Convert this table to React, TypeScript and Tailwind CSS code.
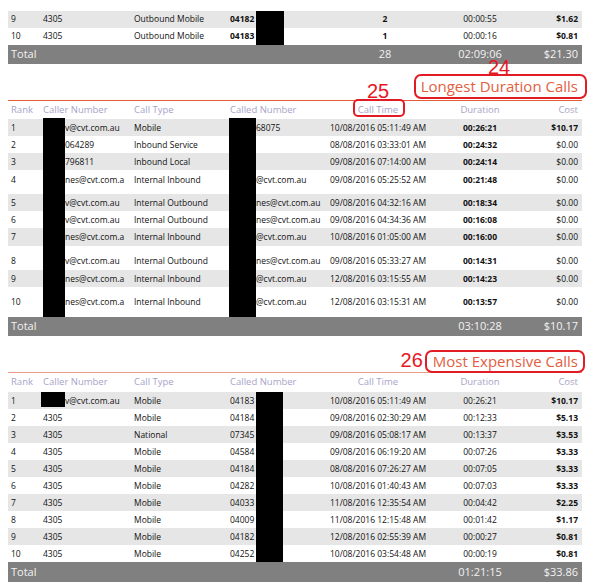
import React from 'react';

interface CallRow {
  rank: string;
  caller: string;
  type: string;
  called: string;
  time: string;
  dur: string;
  cost: string;
  row: string; // height + vertical alignment of the row
  durBold?: boolean;
  costBold?: boolean;
  calledBold?: boolean;
  callerPad?: boolean;
  calledPad?: boolean;
}

const cols = 'grid grid-cols-[35px_91px_96px_88px_120px_84px_60px]';
const colsFirst = 'grid grid-cols-[35px_91px_96px_88px_134px_56px_74px]';

const firstRows = [
  { rank: '9', caller: '4305', type: 'Outbound Mobile', called: '04182', count: '2', dur: '00:00:55', cost: '$1.62' },
  { rank: '10', caller: '4305', type: 'Outbound Mobile', called: '04183', count: '1', dur: '00:00:16', cost: '$0.81' },
];

const s17 = 'h-[17px] items-center';

// Longest duration calls
const longestRows: CallRow[] = [
  { rank: '1', caller: 'v@cvt.com.au', type: 'Mobile', called: '68075', time: '10/08/2016 05:11:49 AM', dur: '00:26:21', cost: '$10.17', row: s17, costBold: true },
  { rank: '2', caller: '064289', type: 'Inbound Service', called: '', time: '08/08/2016 03:33:01 AM', dur: '00:24:32', cost: '$0.00', row: s17 },
  { rank: '3', caller: '796811', type: 'Inbound Local', called: '', time: '09/08/2016 07:14:00 AM', dur: '00:24:14', cost: '$0.00', row: s17 },
  { rank: '4', caller: 'nes@cvt.com.a', type: 'Internal Inbound', called: '@cvt.com.au', time: '09/08/2016 05:25:52 AM', dur: '00:21:48', cost: '$0.00', row: 'h-[24px] items-start pt-[4px]' },
  { rank: '5', caller: 'v@cvt.com.au', type: 'Internal Outbound', called: 'nes@cvt.com.au', time: '09/08/2016 04:32:16 AM', dur: '00:18:34', cost: '$0.00', row: s17 },
  { rank: '6', caller: 'v@cvt.com.au', type: 'Internal Outbound', called: 'nes@cvt.com.au', time: '09/08/2016 04:34:36 AM', dur: '00:16:08', cost: '$0.00', row: s17 },
  { rank: '7', caller: 'nes@cvt.com.a', type: 'Internal Inbound', called: '@cvt.com.au', time: '10/08/2016 01:05:00 AM', dur: '00:16:00', cost: '$0.00', row: 'h-[18px] items-center' },
  { rank: '8', caller: 'v@cvt.com.au', type: 'Internal Outbound', called: 'nes@cvt.com.au', time: '09/08/2016 05:33:27 AM', dur: '00:14:31', cost: '$0.00', row: 'h-[24px] items-start pt-[9px]' },
  { rank: '9', caller: 'nes@cvt.com.a', type: 'Internal Inbound', called: '@cvt.com.au', time: '12/08/2016 03:15:55 AM', dur: '00:14:23', cost: '$0.00', row: s17 },
  { rank: '10', caller: 'nes@cvt.com.a', type: 'Internal Inbound', called: '@cvt.com.au', time: '12/08/2016 03:15:31 AM', dur: '00:13:57', cost: '$0.00', row: 'h-[30px] items-center' },
].map((r) => ({ ...r, durBold: true, callerPad: true, calledPad: true }));

// Most expensive calls
const expensiveRows: CallRow[] = [
  ['1', 'v@cvt.com.au', 'Mobile', '04183', '10/08/2016 05:11:49 AM', '00:26:21', '$10.17'],
  ['2', '4305', 'Mobile', '04184', '09/08/2016 02:30:29 AM', '00:12:33', '$5.13'],
  ['3', '4305', 'National', '07345', '09/08/2016 05:08:17 AM', '00:13:37', '$3.53'],
  ['4', '4305', 'Mobile', '04584', '09/08/2016 06:19:20 AM', '00:07:26', '$3.33'],
  ['5', '4305', 'Mobile', '04184', '08/08/2016 07:26:27 AM', '00:07:05', '$3.33'],
  ['6', '4305', 'Mobile', '04282', '10/08/2016 01:40:43 AM', '00:07:03', '$3.33'],
  ['7', '4305', 'Mobile', '04033', '11/08/2016 12:35:54 AM', '00:04:42', '$2.25'],
  ['8', '4305', 'Mobile', '04009', '11/08/2016 12:15:48 AM', '00:01:42', '$1.17'],
  ['9', '4305', 'Mobile', '04182', '12/08/2016 02:55:39 AM', '00:00:27', '$0.81'],
  ['10', '4305', 'Mobile', '04252', '10/08/2016 03:54:48 AM', '00:00:19', '$0.81'],
].map(([rank, caller, type, called, time, dur, cost]) => ({
  rank, caller, type, called, time, dur, cost,
  row: s17,
  costBold: true,
  callerPad: rank === '1',
}));

const HeaderRow = ({ h }: { h: string }) => (
  <div className={`${cols} ${h} items-center text-[9.5px] text-[#a7a4c8]`}>
    <div className="pl-[3px]">Rank</div>
    <div>Caller Number</div>
    <div>Call Type</div>
    <div className="whitespace-nowrap">Called Number</div>
    <div className="text-center">Call Time</div>
    <div className="text-center">Duration</div>
    <div className="text-right pr-[4px]">Cost</div>
  </div>
);

const DataRow = ({ r, i }: { r: CallRow; i: number }) => (
  <div className={`${cols} ${r.row} ${i % 2 === 0 ? 'bg-[#e6e6e6]' : 'bg-white'} leading-[12px]`}>
    <div className="pl-[3px]">{r.rank}</div>
    <div className={`whitespace-nowrap overflow-hidden ${r.callerPad ? 'pl-[22px]' : ''}`}>{r.caller}</div>
    <div className="whitespace-nowrap">{r.type}</div>
    <div className={`whitespace-nowrap ${r.calledPad ? 'pl-[26px]' : ''} ${r.calledBold ? 'font-bold' : ''}`}>{r.called}</div>
    <div className="text-center whitespace-nowrap">{r.time}</div>
    <div className={`text-center ${r.durBold ? 'font-bold' : ''}`}>{r.dur}</div>
    <div className={`text-right pr-[4px] ${r.costBold ? 'font-bold' : ''}`}>{r.cost}</div>
  </div>
);

const TotalBar = ({ dur, cost, h }: { dur: string; cost: string; h: string }) => (
  <div className={`${cols} ${h} items-center bg-[#808080] text-[11px] text-[#f2f2f2]`}>
    <div className="pl-[3px] col-span-5">Total</div>
    <div className="text-center">{dur}</div>
    <div className="text-right pr-[4px]">{cost}</div>
  </div>
);

const Redact = ({ className }: { className: string }) => <div className={`absolute bg-black ${className}`} />;

export default function App() {
  return (
    <div className="w-[591px] h-[583px] bg-white overflow-hidden font-['Open_Sans',sans-serif] text-[8.5px] text-[#111]">
      <div className="ml-[8px] w-[574px] pt-[11px]">
        {/* tail of previous table */}
        <div className="relative">
          {firstRows.map((r, i) => (
            <div key={r.rank} className={`${colsFirst} h-[17px] items-center ${i === 0 ? 'bg-[#e6e6e6]' : 'bg-white'}`}>
              <div className="pl-[3px]">{r.rank}</div>
              <div>{r.caller}</div>
              <div>{r.type}</div>
              <div className="font-bold">{r.called}</div>
              <div className="text-center font-bold">{r.count}</div>
              <div className="text-center">{r.dur}</div>
              <div className="text-right pr-[4px] font-bold">{r.cost}</div>
            </div>
          ))}
          <Redact className="left-[248px] top-0 w-[28px] h-[34px]" />
        </div>
        <div className={`${colsFirst} h-[19px] items-center bg-[#808080] text-[11px] text-[#f2f2f2]`}>
          <div className="pl-[3px] col-span-4">Total</div>
          <div className="text-center">28</div>
          <div className="text-center">02:09:06</div>
          <div className="text-right pr-[4px]">$21.30</div>
        </div>

        {/* Longest Duration Calls */}
        <div className="relative mt-[10px]">
          <div className="flex justify-end items-start h-[27px] border-b border-[#e35c3c]">
            <span className="mr-[-5px] h-[25px] flex items-center pl-[5px] pr-[7px] border-2 border-[#e21c24] rounded-[7px] text-[15px] text-[#e2603f] whitespace-nowrap">
              Longest Duration Calls
            </span>
          </div>
          <span className="absolute left-[480px] top-[-17px] font-['Liberation_Sans',sans-serif] text-[20px] leading-[20px] text-[#e8161e]">24</span>
          <span className="absolute left-[359px] top-[7px] font-['Liberation_Sans',sans-serif] text-[20px] leading-[20px] text-[#e8161e]">25</span>
          <div className="absolute left-[345px] top-[25px] w-[52px] h-[18px] border-2 border-[#e21c24] rounded-[5px]" />
          <HeaderRow h="h-[18px]" />
          <div className="relative">
            {longestRows.map((r, i) => (
              <DataRow key={r.rank} r={r} i={i} />
            ))}
            <Redact className="left-[35px] top-[-1px] w-[22px] h-[199px]" />
            <Redact className="left-[221px] top-[-1px] w-[27px] h-[199px]" />
          </div>
          <TotalBar dur="03:10:28" cost="$10.17" h="h-[19px]" />
        </div>

        {/* Most Expensive Calls */}
        <div className="mt-[14px]">
          <div className="flex justify-end items-start h-[23px] border-b border-[#e79c86]">
            <span className="mr-[2px] h-[20px] flex items-center font-['Liberation_Sans',sans-serif] text-[20px] text-[#e8161e]">26</span>
            <span className="mr-[-3px] h-[23px] flex items-center pl-[6px] pr-[5px] border-2 border-[#e21c24] rounded-[7px] text-[15px] text-[#e2603f] whitespace-nowrap">
              Most Expensive Calls
            </span>
          </div>
          <HeaderRow h="h-[19px]" />
          <div className="relative">
            {expensiveRows.map((r, i) => (
              <DataRow key={r.rank} r={r} i={i} />
            ))}
            <Redact className="left-[33px] top-0 w-[24px] h-[15px]" />
            <Redact className="left-[248px] top-0 w-[27px] h-[170px]" />
          </div>
          <TotalBar dur="01:21:15" cost="$33.86" h="h-[20px]" />
        </div>
      </div>
    </div>
  );
}
